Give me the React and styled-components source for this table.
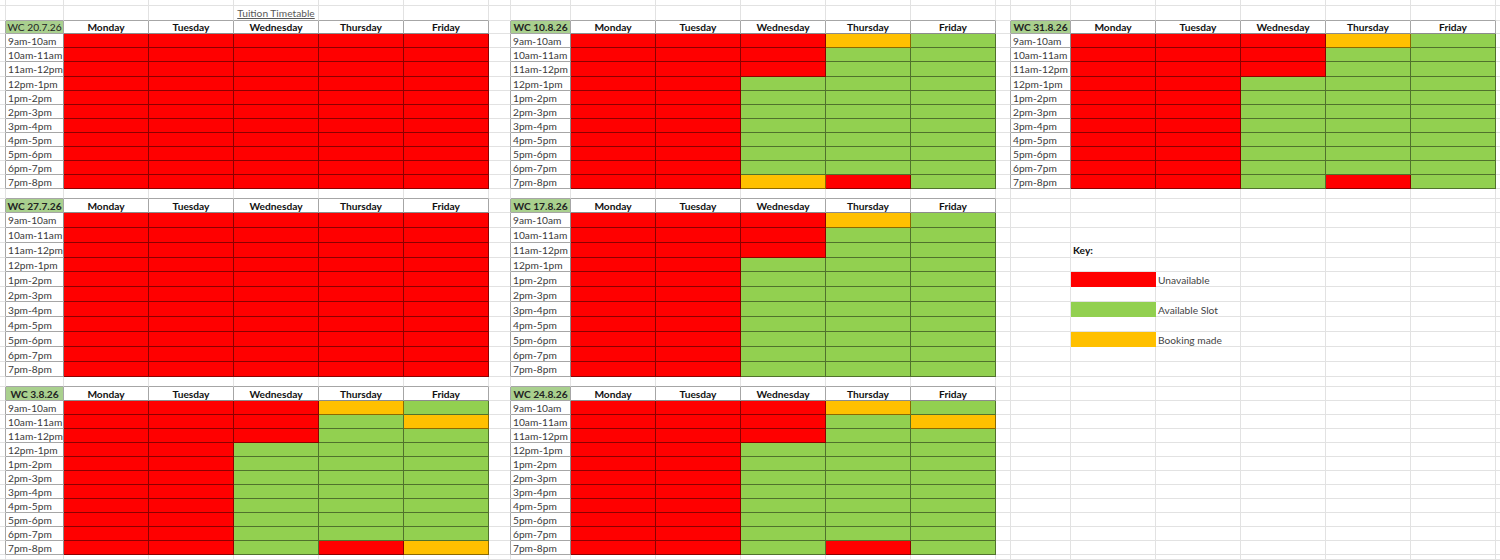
import React from 'react';
import styled, { createGlobalStyle } from 'styled-components';

const RED = '#ff0000';
const GREEN = '#92d050';
const AMBER = '#ffc000';
const WEEK = '#a9d08e';

const GRID = '#e2e2e2';
const EDGE = '#a6a6a6';
const INK = 'rgba(0, 0, 0, 0.45)';

const FILLS = { R: RED, G: GREEN, B: AMBER };

// sheet column widths / row heights, measured off the screenshot
const COLS = [6, 58, 85, 85, 85, 85, 85, 22, 60, 85, 85, 85, 85, 85, 15, 60, 85, 85, 85, 85, 85, 4];
const ROWS = [
  6, 14.5, 13.8, ...Array(11).fill(14.1),
  10, 13.4, ...Array(11).fill(14.95),
  10, 14, ...Array(11).fill(14),
  5,
];

const DAYS = ['Monday', 'Tuesday', 'Wednesday', 'Thursday', 'Friday'];
const TIMES = [
  '9am-10am', '10am-11am', '11am-12pm', '12pm-1pm', '1pm-2pm', '2pm-3pm',
  '3pm-4pm', '4pm-5pm', '5pm-6pm', '6pm-7pm', '7pm-8pm',
];

const ALL_RED = 'RRRRRRRRRRR';
const ALL_GREEN = 'GGGGGGGGGGG';

const WEEKS = [
  { label: 'WC 20.7.26', row: 2, col: 1, bold: false, days: [ALL_RED, ALL_RED, ALL_RED, ALL_RED, ALL_RED] },
  { label: 'WC 10.8.26', row: 2, col: 8, bold: true, days: [ALL_RED, ALL_RED, 'RRRGGGGGGGB', 'BGGGGGGGGGR', ALL_GREEN] },
  { label: 'WC 31.8.26', row: 2, col: 15, bold: true, days: [ALL_RED, ALL_RED, 'RRRGGGGGGGG', 'BGGGGGGGGGR', ALL_GREEN] },
  { label: 'WC 27.7.26', row: 15, col: 1, bold: true, days: [ALL_RED, ALL_RED, ALL_RED, ALL_RED, ALL_RED] },
  { label: 'WC 17.8.26', row: 15, col: 8, bold: true, days: [ALL_RED, ALL_RED, 'RRRGGGGGGGG', 'BGGGGGGGGGG', ALL_GREEN] },
  { label: 'WC 3.8.26', row: 28, col: 1, bold: true, days: [ALL_RED, ALL_RED, 'RRRGGGGGGGG', 'BGGGGGGGGGR', 'GBGGGGGGGGB'] },
  { label: 'WC 24.8.26', row: 28, col: 8, bold: true, days: [ALL_RED, ALL_RED, 'RRRGGGGGGGG', 'BGGGGGGGGGR', 'GBGGGGGGGGG'] },
];

const KEY = [
  { row: 20, fill: RED, text: 'Unavailable' },
  { row: 22, fill: GREEN, text: 'Available Slot' },
  { row: 24, fill: AMBER, text: 'Booking made' },
];

const RANK = { empty: 0, swatch: 0, title: 0, note: 0, time: 1, head: 1, week: 1, slot: 2 };

const GlobalStyle = createGlobalStyle`
  html, body {
    margin: 0;
    padding: 0;
    background: #fff;
  }
  body {
    font-family: Lato, "Open Sans", "Liberation Sans", sans-serif;
  }
`;

const Sheet = styled.div`
  display: grid;
  grid-template-columns: ${COLS.map((w) => `${w}px`).join(' ')};
  grid-template-rows: ${ROWS.map((h) => `${h}px`).join(' ')};
  width: 1500px;
  height: 560px;
  overflow: hidden;
  background: #fff;
`;

const Cell = styled.div`
  box-sizing: border-box;
  display: flex;
  align-items: center;
  justify-content: ${({ $align }) => ($align === 'center' ? 'center' : 'flex-start')};
  padding: 1px 2px 0;
  min-width: 0;
  background: ${({ $fill }) => $fill || '#fff'};
  border-right: 1px solid ${({ $right }) => $right};
  border-bottom: 1px solid ${({ $bottom }) => $bottom};
  font-size: 10.2px;
  line-height: 1;
  font-weight: ${({ $bold }) => ($bold ? 700 : 400)};
  color: ${({ $ink }) => $ink || '#3a3a3a'};
  white-space: nowrap;
`;

const Title = styled.span`
  text-decoration: underline;
  text-underline-offset: 1px;
  color: #595959;
`;

function buildSheet() {
  const grid = ROWS.map(() => COLS.map(() => ({ kind: 'empty' })));

  WEEKS.forEach((wk) => {
    grid[wk.row][wk.col] = { kind: 'week', text: wk.label, fill: WEEK, bold: wk.bold, align: 'center', ink: '#222' };
    DAYS.forEach((d, i) => {
      grid[wk.row][wk.col + 1 + i] = { kind: 'head', text: d, bold: true, align: 'center', ink: '#111' };
    });
    TIMES.forEach((t, r) => {
      grid[wk.row + 1 + r][wk.col] = { kind: 'time', text: t };
      wk.days.forEach((day, i) => {
        grid[wk.row + 1 + r][wk.col + 1 + i] = { kind: 'slot', fill: FILLS[day[r]] };
      });
    });
  });

  grid[1][4] = { kind: 'title', text: 'Tuition Timetable', align: 'center' };
  grid[18][16] = { kind: 'note', text: 'Key:', bold: true, ink: '#111' };
  KEY.forEach((k) => {
    grid[k.row][16] = { kind: 'swatch', fill: k.fill };
    grid[k.row][17] = { kind: 'note', text: k.text, ink: '#444' };
  });

  return grid;
}

// the heavier of two neighbouring cells decides the shared line
function lineColour(cell, next) {
  const r = Math.max(RANK[cell.kind], next ? RANK[next.kind] : 0);
  if (r === 2) return INK;
  if (r === 1) return EDGE;
  if (cell.kind === 'swatch') return cell.fill;
  return GRID;
}

export default function App() {
  const grid = buildSheet();
  return (
    <>
      <GlobalStyle />
      <Sheet>
        {grid.map((row, r) =>
          row.map((cell, c) => (
            <Cell
              key={`${r}-${c}`}
              $fill={cell.fill}
              $bold={cell.bold}
              $align={cell.align}
              $ink={cell.ink}
              $right={lineColour(cell, row[c + 1])}
              $bottom={lineColour(cell, grid[r + 1] && grid[r + 1][c])}
            >
              {cell.kind === 'title' ? <Title>{cell.text}</Title> : cell.text}
            </Cell>
          ))
        )}
      </Sheet>
    </>
  );
}
